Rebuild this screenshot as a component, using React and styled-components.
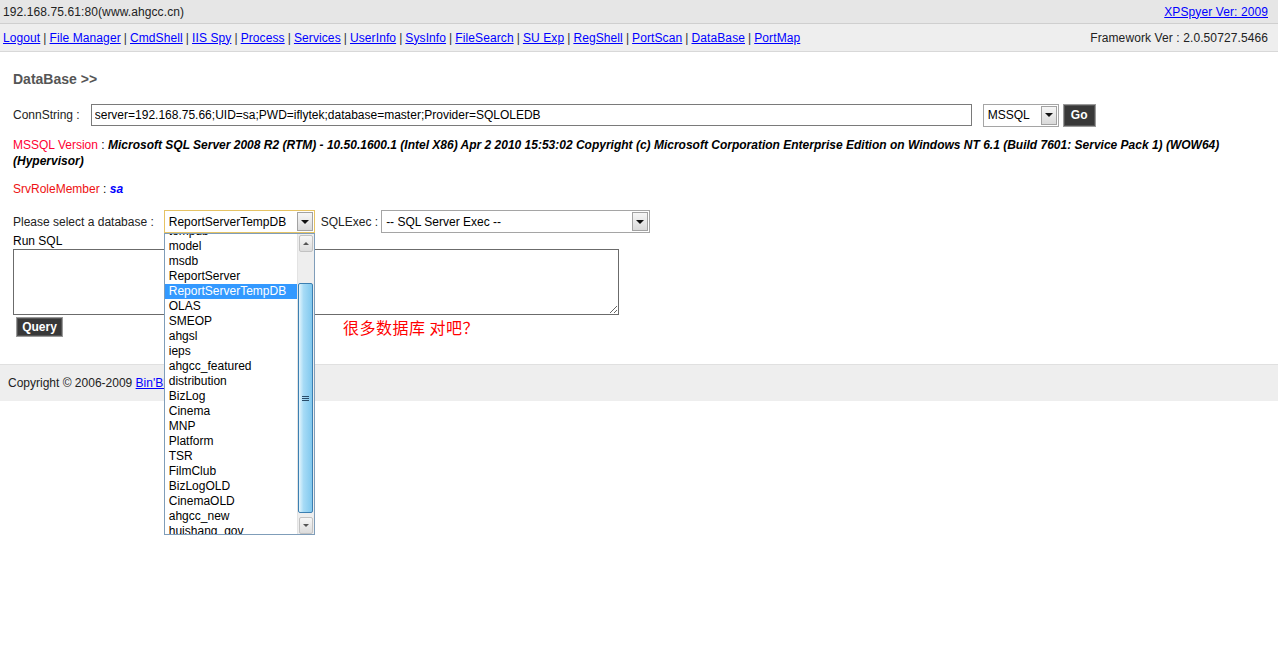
import React from 'react'
import styled, { createGlobalStyle } from 'styled-components'

const GlobalStyle = createGlobalStyle`
  html, body {
    margin: 0;
    background: #fff;
    color: #000;
    font: 12px "Liberation Sans", Arial, sans-serif;
  }
  a { color: #0000ff; text-decoration: underline; }
`

const Page = styled.div`
  min-height: 669px;
  background: #fff;
`

const TopBar = styled.div`
  display: flex;
  justify-content: space-between;
  align-items: center;
  height: 23px;
  padding: 0 10px 0 3px;
  background: #e6e6e6;
  border-bottom: 1px solid #cfcfcf;
  color: #222;
  line-height: 14px;
  letter-spacing: 0.1px;
`

const NavBar = styled.div`
  display: flex;
  justify-content: space-between;
  align-items: center;
  height: 27px;
  padding: 0 10px 0 3px;
  background: #eeeeee;
  border-bottom: 1px solid #d8d8d8;
  color: #222;
  letter-spacing: 0.1px;
`

const Sep = styled.span`
  color: #333;
  padding: 0 3px;
`

const Main = styled.div`
  padding: 19px 13px 0 13px;
`

const Title = styled.div`
  font-size: 14px;
  font-weight: bold;
  color: #555;
  line-height: 16px;
`

const Row = styled.div`
  display: flex;
  align-items: center;
  height: ${p => p.$h || 23}px;
  margin-top: ${p => p.$mt || 0}px;
`

const Label = styled.span`
  color: #222;
  white-space: nowrap;
  margin-left: ${p => p.$ml || 0}px;
`

const TextInput = styled.input`
  box-sizing: border-box;
  width: ${p => p.$w}px;
  height: 22px;
  margin-left: ${p => p.$ml || 0}px;
  padding: 0 3px;
  border: 1px solid #7a7a7a;
  font: 12px "Liberation Sans", Arial, sans-serif;
  color: #000;
  outline: none;
`

const SelectBox = styled.div`
  box-sizing: border-box;
  display: flex;
  align-items: center;
  justify-content: space-between;
  width: ${p => p.$w}px;
  height: 23px;
  padding: 0 1px 0 4px;
  border: 1px solid ${p => (p.$focused ? '#e5c365' : '#a5a5a5')};
  background: #fff;
  color: #000;
  white-space: nowrap;
`

const ArrowBtn = styled.div`
  box-sizing: border-box;
  width: 16px;
  height: 19px;
  display: flex;
  align-items: center;
  justify-content: center;
  border: 1px solid #a2a2a2;
  background: linear-gradient(#f6f6f6, #dadada);
`

const Triangle = styled.div`
  width: 0;
  height: 0;
  border-left: 4px solid transparent;
  border-right: 4px solid transparent;
  border-top: 4px solid #111;
`

const DarkButton = styled.button`
  box-sizing: border-box;
  width: ${p => p.$w}px;
  height: ${p => p.$h}px;
  margin-left: ${p => p.$ml || 0}px;
  padding: 0;
  border: 1px solid #9a9a9a;
  box-shadow: inset 0 0 0 1px #555;
  background: #383838;
  color: #fff;
  font: bold 12px "Liberation Sans", Arial, sans-serif;
`

const Info = styled.div`
  line-height: 16px;
  margin-top: ${p => p.$mt}px;
  padding-right: 24px;
`

const Red = styled.span`
  color: ${p => p.$c || '#ff0033'};
`

const Detail = styled.span`
  font-weight: bold;
  font-style: italic;
  color: #000;
`

const Sa = styled.span`
  font-weight: bold;
  font-style: italic;
  color: #0000ff;
`

const SelectWrap = styled.div`
  position: relative;
  margin-left: ${p => p.$ml || 0}px;
`

const DropList = styled.div`
  position: absolute;
  top: 100%;
  left: 0;
  z-index: 5;
  box-sizing: border-box;
  width: 151px;
  height: 302px;
  display: flex;
  background: #fff;
  border: 1px solid #7f9db9;
`

const Items = styled.div`
  flex: 1;
  overflow: hidden;
`

const ItemsInner = styled.div`
  margin-top: -25px;
`

const Item = styled.div`
  height: 15px;
  line-height: 15px;
  padding-left: 4px;
  white-space: nowrap;
  color: ${p => (p.$active ? '#fff' : '#000')};
  background: ${p => (p.$active ? '#3399ff' : 'transparent')};
`

const ScrollBar = styled.div`
  width: 16px;
  display: flex;
  flex-direction: column;
  background: #eeeeee;
  border-left: 1px solid #e3e3e3;
`

const ScrollBtn = styled.div`
  box-sizing: border-box;
  height: 17px;
  margin: 1px 1px 0 1px;
  display: flex;
  align-items: center;
  justify-content: center;
  border: 1px solid #c2c2c2;
  border-radius: 2px;
  background: linear-gradient(#f7f7f7, #dcdcdc);
`

const SmallTri = styled.div`
  width: 0;
  height: 0;
  border-left: 3px solid transparent;
  border-right: 3px solid transparent;
  ${p => (p.$up ? 'border-bottom: 3px solid #555;' : 'border-top: 3px solid #555;')}
`

const Track = styled.div`
  flex: 1;
  padding: 31px 1px 3px 0;
`

const Thumb = styled.div`
  box-sizing: border-box;
  height: 230px;
  display: flex;
  align-items: center;
  justify-content: center;
  border: 1px solid #3c7fb1;
  border-radius: 2px;
  background: linear-gradient(to right, #e4f5fd, #a7dbf6 35%, #80c8ee);
`

const SqlBox = styled.textarea`
  display: block;
  box-sizing: border-box;
  width: 606px;
  height: 66px;
  border: 1px solid #6b6b6b;
  font: 12px "Liberation Sans", Arial, sans-serif;
`

const QueryRow = styled.div`
  display: flex;
  align-items: center;
  margin-top: 2px;
  padding-left: 3px;
`

const Note = styled.span`
  margin-left: 280px;
  color: #ff0000;
  font: 16px "Noto Sans CJK SC", "Liberation Sans", sans-serif;
  letter-spacing: 0.5px;
  line-height: 18px;
`

const Footer = styled.div`
  margin-top: 27px;
  height: 36px;
  display: flex;
  align-items: center;
  padding-left: 8px;
  background: #eeeeee;
  border-top: 1px solid #e0e0e0;
  color: #222;
`

const navLinks = [
  'Logout', 'File Manager', 'CmdShell', 'IIS Spy', 'Process', 'Services', 'UserInfo',
  'SysInfo', 'FileSearch', 'SU Exp', 'RegShell', 'PortScan', 'DataBase', 'PortMap',
]

const databases = [
  'master', 'tempdb', 'model', 'msdb', 'ReportServer', 'ReportServerTempDB', 'OLAS', 'SMEOP',
  'ahgsl', 'ieps', 'ahgcc_featured', 'distribution', 'BizLog', 'Cinema', 'MNP', 'Platform',
  'TSR', 'FilmClub', 'BizLogOLD', 'CinemaOLD', 'ahgcc_new', 'huishang_gov', 'ahgcc_old',
]

const Select = ({ width, value, focused }) => (
  <SelectBox $w={width} $focused={focused}>
    <span>{value}</span>
    <ArrowBtn>
      <Triangle />
    </ArrowBtn>
  </SelectBox>
)

const Grip = () => (
  <svg width="7" height="7" viewBox="0 0 7 7">
    <path d="M0 1.5h7M0 3.5h7M0 5.5h7" stroke="#2a4d6a" strokeWidth="1" />
  </svg>
)

export default function App() {
  return (
    <Page>
      <GlobalStyle />
      <TopBar>
        <span>192.168.75.61:80(www.ahgcc.cn)</span>
        <a href="#">XPSpyer Ver: 2009</a>
      </TopBar>
      <NavBar>
        <span>
          {navLinks.map((l, i) => (
            <React.Fragment key={l}>
              {i > 0 && <Sep>|</Sep>}
              <a href="#">{l}</a>
            </React.Fragment>
          ))}
        </span>
        <span>Framework Ver : 2.0.50727.5466</span>
      </NavBar>

      <Main>
        <Title>DataBase &gt;&gt;</Title>

        <Row $mt={16} $h={24}>
          <Label>ConnString :</Label>
          <TextInput
            $w={881}
            $ml={11}
            defaultValue="server=192.168.75.66;UID=sa;PWD=iflytek;database=master;Provider=SQLOLEDB"
          />
          <SelectWrap $ml={11}>
            <Select width={76} value="MSSQL" />
          </SelectWrap>
          <DarkButton $w={33} $h={23} $ml={4}>Go</DarkButton>
        </Row>

        <Info $mt={10}>
          <Red>MSSQL Version</Red> :{' '}
          <Detail>
            Microsoft SQL Server 2008 R2 (RTM) - 10.50.1600.1 (Intel X86) Apr 2 2010 15:53:02 Copyright (c)
            Microsoft Corporation Enterprise Edition on Windows NT 6.1 (Build 7601: Service Pack 1) (WOW64)
            (Hypervisor)
          </Detail>
        </Info>

        <Info $mt={12}>
          <Red $c="#ee1111">SrvRoleMember</Red> : <Sa>sa</Sa>
        </Info>

        <Row $mt={13}>
          <Label>Please select a database :</Label>
          <SelectWrap $ml={10}>
            <Select width={151} value="ReportServerTempDB" focused />
            <DropList>
              <Items>
                <ItemsInner>
                  {databases.map(d => (
                    <Item key={d} $active={d === 'ReportServerTempDB'}>{d}</Item>
                  ))}
                </ItemsInner>
              </Items>
              <ScrollBar>
                <ScrollBtn><SmallTri $up /></ScrollBtn>
                <Track>
                  <Thumb><Grip /></Thumb>
                </Track>
                <ScrollBtn><SmallTri /></ScrollBtn>
              </ScrollBar>
            </DropList>
          </SelectWrap>
          <Label $ml={6}>SQLExec :</Label>
          <SelectWrap $ml={3}>
            <Select width={269} value="-- SQL Server Exec --" />
          </SelectWrap>
        </Row>

        <Info $mt={0}>Run SQL</Info>
        <SqlBox />
        <QueryRow>
          <DarkButton $w={47} $h={20}>Query</DarkButton>
          <Note>很多数据库 对吧？</Note>
        </QueryRow>
      </Main>

      <Footer>
        <span>
          Copyright © 2006-2009 <a href="#">Bin'Blog</a>
        </span>
      </Footer>
    </Page>
  )
}
